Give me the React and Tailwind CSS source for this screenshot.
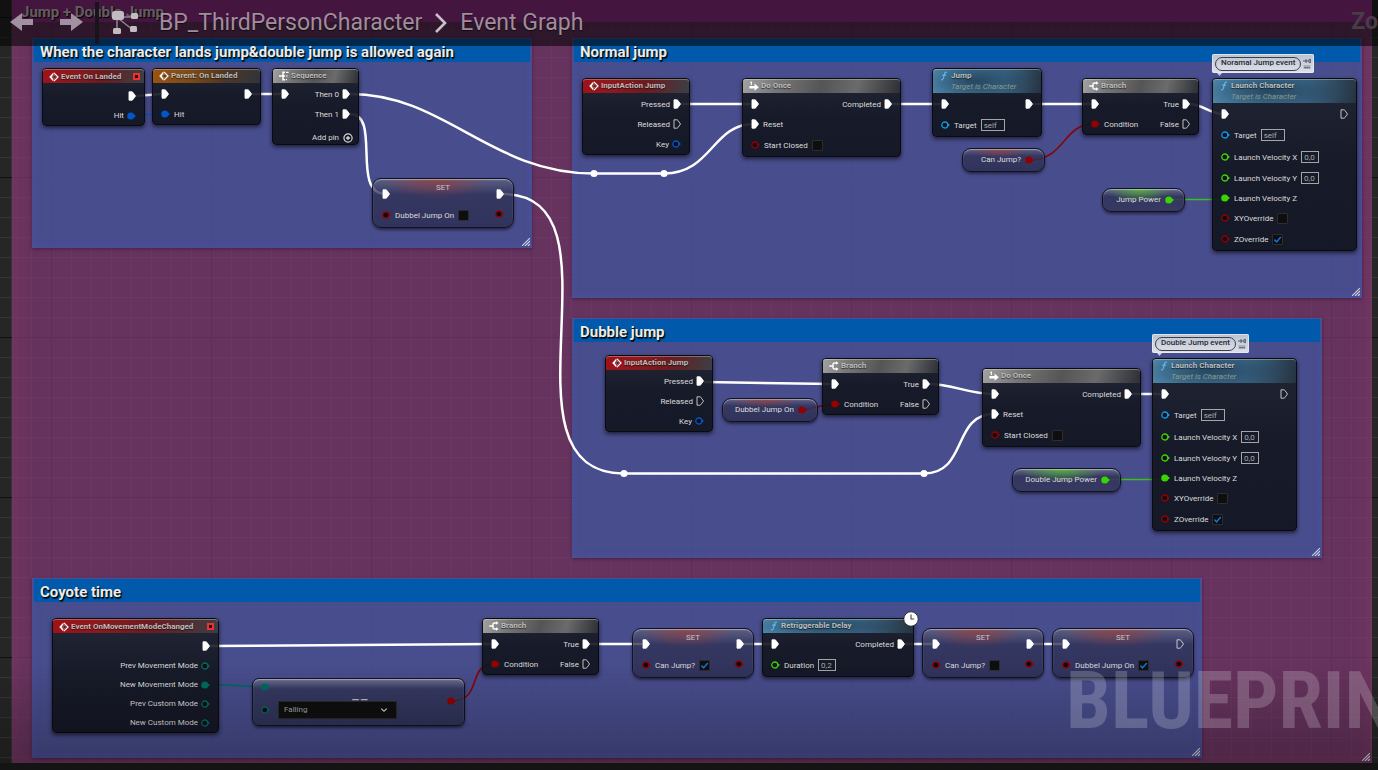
import React from "react";

/* ---------- pins ---------- */

const COLORS = {
  bool: "#920101",
  real: "#38d500",
  object: "#0b9be6",
  struct: "#0057c8",
  byte: "#006b5f",
};

function ExecPin({ on }) {
  return (
    <svg className="h-[10px] w-2 shrink-0" viewBox="0 0 8 10" aria-hidden="true">
      <path
        d="M1 .8H3.8Q4.4.8 4.8 1.3L7.5 5 4.8 8.7Q4.4 9.2 3.8 9.2H1Z"
        fill={on ? "#fff" : "none"}
        stroke={on ? "#fff" : "#d6d6d6"}
        strokeWidth="0.9"
        strokeLinejoin="round"
      />
    </svg>
  );
}

function DataPin({ type, on }) {
  const c = COLORS[type];
  return (
    <svg className="h-[8px] w-[9px] shrink-0" viewBox="0 0 9 8" aria-hidden="true">
      <path d="M7 2.4 9 4 7 5.6Z" fill={c} />
      <circle cx="3.8" cy="4" r={on ? 3.6 : 3} fill={on ? c : "#0b0d14"} stroke={c} strokeWidth={on ? 0 : 1.3} />
    </svg>
  );
}

function Pin({ pin }) {
  return pin.type === "exec" ? <ExecPin on={pin.on} /> : <DataPin type={pin.type} on={pin.on} />;
}

function Check({ checked }) {
  return (
    <span className="grid size-[11px] shrink-0 place-items-center">
      <input
        type="checkbox"
        defaultChecked={checked}
        className="peer col-start-1 row-start-1 size-[11px] appearance-none rounded-[1px] border border-[#2d2d2d] bg-[#0e0e0e]"
      />
      <svg
        className="pointer-events-none invisible col-start-1 row-start-1 size-[9px] peer-checked:visible"
        viewBox="0 0 9 9"
        aria-hidden="true"
      >
        <path d="M1.4 4.6 3.6 6.8 7.8 2" fill="none" stroke="#0a74e0" strokeWidth="1.5" />
      </svg>
    </span>
  );
}

function Field({ value, wide }) {
  return (
    <input
      type="text"
      defaultValue={value}
      className={
        (wide ? "w-6" : "w-[18px]") +
        " h-3 border border-[#a3a5a8] bg-transparent px-[2px] text-[8px] leading-[10px] text-[#a9abae]"
      }
    />
  );
}

function Left({ pin }) {
  if (!pin) return <span />;
  return (
    <label className="flex items-center gap-1">
      <Pin pin={pin} />
      {pin.label && <span className="pt-px">{pin.label}</span>}
      {pin.check !== undefined && <Check checked={pin.check} />}
      {pin.value && <Field value={pin.value} wide={pin.value === "self"} />}
    </label>
  );
}

function Right({ pin }) {
  if (!pin) return <span />;
  return (
    <span className="flex items-center gap-[3px]">
      {pin.label && <span className="pt-px">{pin.label}</span>}
      <Pin pin={pin} />
    </span>
  );
}

/* ---------- header icons ---------- */

function EventIcon() {
  return (
    <svg className="size-[10px] shrink-0" viewBox="0 0 10 10" aria-hidden="true">
      <path d="M4.4.6V2.8L2.9 4.2V5.8L4.4 7.2V9.4L.2 5Z" fill="#fff" />
      <path d="M5 .9 9.1 5 5 9.1" fill="none" stroke="#fff" strokeWidth="1.1" />
      <path d="M3.6 4.3H5.2V3L7.4 5 5.2 7V5.7H3.6Z" fill="#2c0d0d" stroke="#fff" strokeWidth=".3" />
    </svg>
  );
}

function SequenceIcon() {
  return (
    <svg className="size-[10px] shrink-0" viewBox="0 0 10 10" aria-hidden="true">
      <path d="M0 5H4M6 1.3H4V8.7H6M4 5H6" fill="none" stroke="#fff" strokeWidth="1.5" />
      <path d="M7 1.3H9.6M7 5H8.6M7 8.7H8" fill="none" stroke="#fff" strokeWidth="1.2" />
    </svg>
  );
}

function BranchIcon() {
  return (
    <svg className="size-[10px] shrink-0" viewBox="0 0 10 10" aria-hidden="true">
      <path d="M.2 5H3.6M7.4 2H5.6Q4 2 4 3.6V6.4Q4 8 5.6 8H7.4" fill="none" stroke="#fff" strokeWidth="1.4" />
      <path d="M7 .2 9.6 2 7 3.8ZM7 6.2 9.6 8 7 9.8Z" fill="#fff" />
    </svg>
  );
}

function OnceIcon() {
  return (
    <svg className="size-[10px] shrink-0" viewBox="0 0 10 10" aria-hidden="true">
      <path d="M1.2 1.6 2.4.8V4" fill="none" stroke="#fff" strokeWidth="1" />
      <path d="M.4 5H5.6V2.6L9.8 6.2 5.6 9.8V7.4H.4Z" fill="#fff" />
    </svg>
  );
}

function FunctionIcon() {
  return (
    <svg className="size-[10px] shrink-0" viewBox="0 0 10 10" aria-hidden="true">
      <path d="M8 1.6Q6.4.4 5.6 2.6L4.3 7.4Q3.6 9.6 2 8.6M3.2 4.2H7" fill="none" stroke="#5cb8f2" strokeWidth="1.2" />
    </svg>
  );
}

const ICONS = { event: EventIcon, sequence: SequenceIcon, branch: BranchIcon, once: OnceIcon, fn: FunctionIcon };

const HEADERS = {
  red: "bg-[linear-gradient(100deg,#a01119_0%,#8a1a1e_30%,#6a1c20_60%,#3b3f45_100%)]",
  orange: "bg-[linear-gradient(100deg,#9a5310_0%,#7e4a18_35%,#4f3825_65%,#30343c_100%)]",
  gray: "bg-[linear-gradient(105deg,#a2a2a2_0%,#777_22%,#555_50%,#6b6b6b_72%,#2c2f35_100%)]",
  blue: "bg-[radial-gradient(ellipse_50%_80%_at_38%_50%,rgba(22,44,62,.6),transparent),linear-gradient(100deg,#5089ae_0%,#3f7499_35%,#3a6688_65%,#26333f_100%)]",
};

/* ---------- nodes ---------- */

function Node({ x, y, w, tone, icon, title, sub, rows, delegate, addPin, latent }) {
  const Icon = ICONS[icon];
  return (
    <section
      className="absolute rounded-[4px] border border-[#0a0b0f] bg-[linear-gradient(180deg,rgba(30,34,44,.91),rgba(18,21,30,.91)_50%,rgba(16,19,28,.91))] shadow-[0_2px_4px_rgba(0,0,0,.6)]"
      style={{ left: x, top: y, width: w }}
    >
      <header
        className={
          "flex gap-[2px] rounded-t-[3px] pr-1 pl-[6px] shadow-[inset_0_1px_0_rgba(255,255,255,.3)] " +
          (sub ? "h-6 " : "h-[14px] ") +
          (delegate ? "pt-[2px] " : "pt-px ") +
          HEADERS[tone]
        }
      >
        <span className="pt-px">
          <Icon />
        </span>
        <div className="min-w-0 flex-1 leading-[11px] whitespace-nowrap">
          <h3 className="font-bold text-[#bcbcbc] [text-shadow:0_1px_1px_rgba(0,0,0,.6)]">{title}</h3>
          {sub && <p className="text-[#8b9a87] italic">{sub}</p>}
        </div>
        {delegate && (
          <button type="button" aria-label="Delegate" className="mt-[2px] size-[7px] border-2 border-[#f03030] bg-[#2a0808]" />
        )}
      </header>
      <div className={"flex flex-col px-2 " + (delegate ? "pt-[3px]" : "pt-px")}>
        {rows.map(([l, r, h], i) => (
          <div key={i} className={"flex items-center justify-between " + (h || "h-5")}>
            <Left pin={l} />
            <Right pin={r} />
          </div>
        ))}
      </div>
      {addPin && (
        <button type="button" className="mt-2 ml-auto flex h-3 items-center gap-1 pr-[5px]">
          Add pin
          <svg className="size-[10px]" viewBox="0 0 10 10" aria-hidden="true">
            <circle cx="5" cy="5" r="4.1" fill="none" stroke="#d8d8d8" strokeWidth="1.2" />
            <path d="M5 3V7M3 5H7" stroke="#d8d8d8" strokeWidth="1.3" />
          </svg>
        </button>
      )}
      {latent && (
        <svg className="absolute -top-2 -right-[6px] size-4" viewBox="0 0 16 16" aria-hidden="true">
          <circle cx="8" cy="8" r="7.2" fill="#fff" stroke="#222" strokeWidth=".8" />
          <path d="M8 3.6V8H11.2" fill="none" stroke="#444" strokeWidth="1.1" />
        </svg>
      )}
    </section>
  );
}

const GLASS =
  "absolute border border-[#10121c] shadow-[0_2px_3px_rgba(0,0,0,.5),inset_0_1px_1px_rgba(220,220,235,.55)] ";
const GLOW = {
  red: "bg-[radial-gradient(ellipse_38%_40%_at_45%_0%,rgba(160,60,52,.7),transparent),linear-gradient(180deg,rgba(100,102,130,.75)_0%,rgba(48,50,86,.8)_32%,rgba(44,46,82,.84)_100%)]",
  green:
    "bg-[radial-gradient(ellipse_40%_60%_at_45%_0%,rgba(85,190,50,.8),transparent),linear-gradient(180deg,rgba(110,112,140,.75)_0%,rgba(48,50,86,.85)_35%,rgba(52,54,92,.85)_100%)]",
  none: "bg-[linear-gradient(180deg,rgba(120,122,150,.8)_0%,rgba(50,52,88,.8)_22%,rgba(44,47,80,.85)_100%)]",
};

function SetNode({ x, y, w, label, checked, last }) {
  return (
    <section className={GLASS + "h-[50px] rounded-[9px] " + GLOW.red} style={{ left: x, top: y, width: w }}>
      <h3 className="pt-1 text-center leading-[10px] text-[#c9c3cc]">SET</h3>
      <div className="-mt-1 flex h-[10px] items-center justify-between px-[9px]">
        <ExecPin on />
        <ExecPin on={!last} />
      </div>
      <div className="mt-[10px] flex h-3 items-center justify-between px-[9px]">
        <label className="flex items-center gap-1">
          <DataPin type="bool" />
          <span className="pt-px">{label}</span>
          <Check checked={checked} />
        </label>
        <span className="pb-[2px]">
          <DataPin type="bool" />
        </span>
      </div>
    </section>
  );
}

function GetNode({ x, y, w, label, type }) {
  return (
    <section
      className={
        GLASS + "flex h-6 items-center justify-end gap-1 rounded-[9px] pr-[10px] " + (type === "bool" ? GLOW.red : GLOW.green)
      }
      style={{ left: x, top: y, width: w }}
    >
      <span>{label}</span>
      <DataPin type={type} on />
    </section>
  );
}

function EqualNode({ x, y, w }) {
  return (
    <section className={GLASS + "flex h-12 rounded-[7px] px-2 " + GLOW.none} style={{ left: x, top: y, width: w }}>
      <div className="flex flex-col gap-[15px] pt-1">
        <DataPin type="byte" on />
        <DataPin type="byte" />
      </div>
      <div className="relative ml-2 flex-1 pt-[22px]">
        <span className="absolute top-[11px] left-[73px] text-[16px] leading-[24px] text-[#b9bac6]" aria-hidden="true">
          ==
        </span>
        <label className="relative flex h-[18px] w-[119px] items-center border border-[#2a2a2a] bg-[#0f0f0f]">
          <select
            aria-label="Movement mode"
            className="h-4 w-full appearance-none bg-transparent pl-[5px] text-[8px] text-[#a6a6a6]"
            defaultValue="Falling"
          >
            <option>Falling</option>
            <option>Walking</option>
          </select>
          <svg className="pointer-events-none mr-2 size-2 shrink-0" viewBox="0 0 8 8" aria-hidden="true">
            <path d="M1.2 2.6 4 5.2 6.8 2.6" fill="none" stroke="#d0d0d0" strokeWidth="1.2" />
          </svg>
        </label>
      </div>
      <div className="pt-[18px]">
        <DataPin type="bool" on />
      </div>
    </section>
  );
}

function Bubble({ x, y, children }) {
  return (
    <aside
      className="absolute flex h-[19px] items-center gap-[2px] rounded-[2px] bg-[linear-gradient(180deg,#b9c2d2,#dfe1ea)] px-[3px] shadow-[inset_0_0_0_1px_rgba(235,238,245,.7)]"
      style={{ left: x, top: y }}
    >
      <span className="rounded-full border border-[#3c3f46] px-[5px] pb-[2px] leading-[10px] font-medium text-[#26282c]">{children}</span>
      <svg className="h-3 w-2" viewBox="0 0 8 12" aria-hidden="true">
        <path d="M0 3H3M3 1V5M3 3H6M6 1.4V4.6H7.6V1.4Z" stroke="#555a64" strokeWidth="1" fill="none" />
        <path d="M.5 7H7.5V11H.5Z" fill="#aab0bb" />
        <path d="M1.5 9.6H2.6M3.6 9.6H4.6M5.6 9.6H6.6" stroke="#333" strokeWidth="1" />
      </svg>
      <svg className="absolute top-[19px] left-[5px] h-[3px] w-[5px]" viewBox="0 0 5 3" aria-hidden="true">
        <path d="M0 0H5L2.5 3Z" fill="#c9cee0" />
      </svg>
    </aside>
  );
}

function Grip() {
  return (
    <svg className="absolute right-[2px] bottom-[2px] size-2" viewBox="0 0 8 8" aria-hidden="true">
      <path d="M0 8 8 0M3 8 8 3M6 8 8 6" stroke="#d3d3de" strokeWidth="1.1" />
    </svg>
  );
}

function Comment({ x, y, w, h, title }) {
  return (
    <section
      className="absolute bg-[rgba(60,89,161,.7)] p-px pl-[2px] shadow-[inset_0_0_10px_rgba(80,90,190,.35),0_1px_3px_rgba(40,10,40,.5)]"
      style={{ left: x, top: y, width: w, height: h }}
    >
      <h2 className="mr-px h-[23px] bg-[#0059ab] pl-[6px] text-[15px] leading-[26px] font-bold text-[#ececec] [text-shadow:1px_1px_1px_#000,1px_2px_1px_rgba(0,0,0,.6)]">
        {title}
      </h2>
      <Grip />
    </section>
  );
}

/* ---------- graph data ---------- */

const ex = (label) => ({ type: "exec", on: true, label });
const exOff = (label) => ({ type: "exec", label });
const pin = (type, label, extra) => ({ type, label, ...extra });

const inputAction = [
  [null, ex("Pressed")],
  [null, exOff("Released")],
  [null, pin("struct", "Key")],
];
const doOnce = [
  [ex(), ex("Completed")],
  [ex("Reset"), null],
  [pin("bool", "Start Closed", { check: false }), null, "h-[22px]"],
];
const branch = [
  [ex(), ex("True")],
  [pin("bool", "Condition", { on: true }), exOff("False")],
];
const launch = [
  [ex(), exOff()],
  [pin("object", "Target", { value: "self" }), null, "h-[22px]"],
  [pin("real", "Launch Velocity X", { value: "0,0" }), null, "h-[22px]"],
  [pin("real", "Launch Velocity Y", { value: "0,0" }), null],
  [pin("real", "Launch Velocity Z", { on: true }), null],
  [pin("bool", "XYOverride", { check: false }), null],
  [pin("bool", "ZOverride", { check: true }), null, "h-[22px]"],
];

const NODES = [
  {
    x: 42, y: 68, w: 103, tone: "red", icon: "event", title: "Event On Landed", delegate: true,
    rows: [[null, ex()], [null, pin("struct", "Hit", { on: true }), "h-[19px]"]],
  },
  {
    x: 152, y: 68, w: 109, tone: "orange", icon: "event", title: "Parent: On Landed",
    rows: [[ex(), ex()], [pin("struct", "Hit", { on: true }), null]],
  },
  {
    x: 272, y: 68, w: 87, tone: "gray", icon: "sequence", title: "Sequence", addPin: true,
    rows: [[ex(), ex("Then 0")], [null, ex("Then 1")]],
  },
  { x: 582, y: 78, w: 108, tone: "red", icon: "event", title: "InputAction Jump", rows: inputAction },
  { x: 742, y: 78, w: 159, tone: "gray", icon: "once", title: "Do Once", rows: doOnce },
  {
    x: 932, y: 68, w: 110, tone: "blue", icon: "fn", title: "Jump", sub: "Target is Character",
    rows: [[ex(), ex()], [pin("object", "Target", { value: "self" }), null, "h-[22px]"]],
  },
  { x: 1082, y: 78, w: 117, tone: "gray", icon: "branch", title: "Branch", rows: branch },
  { x: 1212, y: 78, w: 145, tone: "blue", icon: "fn", title: "Launch Character", sub: "Target is Character", rows: launch },
  { x: 605, y: 355, w: 108, tone: "red", icon: "event", title: "InputAction Jump", rows: inputAction },
  { x: 822, y: 358, w: 117, tone: "gray", icon: "branch", title: "Branch", rows: branch },
  { x: 982, y: 368, w: 159, tone: "gray", icon: "once", title: "Do Once", rows: doOnce },
  { x: 1152, y: 358, w: 145, tone: "blue", icon: "fn", title: "Launch Character", sub: "Target is Character", rows: launch },
  {
    x: 52, y: 618, w: 167, tone: "red", icon: "event", title: "Event OnMovementModeChanged", delegate: true,
    rows: [
      [null, ex()],
      [null, pin("byte", "Prev Movement Mode"), "h-[19px]"],
      [null, pin("byte", "New Movement Mode", { on: true }), "h-[19px]"],
      [null, pin("byte", "Prev Custom Mode"), "h-[19px]"],
      [null, pin("byte", "New Custom Mode"), "h-[19px]"],
    ],
  },
  { x: 482, y: 618, w: 117, tone: "gray", icon: "branch", title: "Branch", rows: branch },
  {
    x: 762, y: 618, w: 152, tone: "blue", icon: "fn", title: "Retriggerable Delay", latent: true,
    rows: [[ex(), ex("Completed")], [pin("real", "Duration", { value: "0,2" }), null, "h-[22px]"]],
  },
];

const EXEC_WIRES = [
  "M135 96 162 94",
  "M250 94H282",
  "M350 94C445 94 490 173.5 594 173.5H664C712 173.5 712 124 754 124",
  "M350 114C382 114 350 194 386 194",
  "M503 194C632 194 489 473.5 624 473.5H924C968 473.5 952 414 994 414",
  "M680 104H752",
  "M891 104H942",
  "M1033 104H1092",
  "M1189 104C1203 104 1209 114 1224 114",
  "M704 382 832 384",
  "M929 384C953 384 968 394 994 394",
  "M1132 394H1162",
  "M209 646 492 644",
  "M589 644H642",
  "M743 644H772",
  "M905 644H932",
  "M1033 644H1062",
];

function Wires() {
  return (
    <svg className="pointer-events-none absolute inset-0 h-[770px] w-[1378px]" viewBox="0 0 1378 770" fill="none" aria-hidden="true">
      <g stroke="#fff" strokeWidth="2.5">
        {EXEC_WIRES.map((d) => (
          <path key={d} d={d} />
        ))}
      </g>
      <g fill="#fff">
        <circle cx="594" cy="173.5" r="3.6" />
        <circle cx="664" cy="173.5" r="3.6" />
        <circle cx="624" cy="473.5" r="3.6" />
        <circle cx="924" cy="473.5" r="3.6" />
      </g>
      <g strokeWidth="1.6">
        <path d="M132 115 162 114" stroke="#0057c8" />
        <path d="M1029 160C1066 160 1062 124 1094 124" stroke="#860509" />
        <path d="M805 409C816 409 822 404 834 404" stroke="#860509" />
        <path d="M451 701C484 701 466 664 494 664" stroke="#860509" />
        <path d="M1169 199.5H1224M1106 479.5H1164" stroke="#38c018" />
        <path d="M206 684 264 687" stroke="#00695f" />
      </g>
    </svg>
  );
}

function Grid() {
  return (
    <svg className="absolute inset-0 size-full" aria-hidden="true">
      <defs>
        <pattern id="minor" x="11" y="17" width="20" height="20" patternUnits="userSpaceOnUse">
          <path d="M0 .5H20M.5 0V20" stroke="#363636" />
        </pattern>
        <pattern id="major" x="51" y="17" width="160" height="160" patternUnits="userSpaceOnUse">
          <path d="M0 .5H160M.5 0V160" stroke="#121212" />
        </pattern>
      </defs>
      <rect width="100%" height="100%" fill="url(#minor)" />
      <rect width="100%" height="100%" fill="url(#major)" />
    </svg>
  );
}

/* ---------- page chrome ---------- */

function Toolbar() {
  return (
    <header className="relative flex h-[46px] items-center overflow-hidden bg-[rgba(0,0,0,.55)] pl-[10px] text-[23px] whitespace-nowrap text-[#a18d9e]">
      <button type="button" aria-label="Back">
        <svg className="h-5 w-6" viewBox="0 0 24 20" aria-hidden="true">
          <path d="M0 9 12 0V6H23V12H12V18Z" fill="#a090a0" />
        </svg>
      </button>
      <button type="button" aria-label="Forward" className="ml-[25px]">
        <svg className="h-5 w-6" viewBox="0 0 24 20" aria-hidden="true">
          <path d="M24 9 12 0V6H1V12H12V18Z" fill="#a090a0" />
        </svg>
      </button>
      <span className="ml-3 h-[42px] w-1 bg-[#17141a]" />
      <svg className="ml-3 h-6 w-7" viewBox="0 0 28 24" aria-hidden="true">
        <path d="M6 6H22M6 6V20M8 8 22 19" stroke="#8d868d" strokeWidth="1.5" />
        <rect x="1" y="0" width="12" height="9" rx="2.5" fill="#c2bcc2" />
        <rect x="20" y="2" width="7" height="6" rx="1.5" fill="#c2bcc2" />
        <rect x="2" y="17" width="8" height="6" rx="1.5" fill="#c2bcc2" />
        <rect x="19" y="15" width="7" height="6" rx="1.5" fill="#c2bcc2" />
      </svg>
      <nav
        aria-label="Breadcrumb"
        className="ml-5 flex items-center gap-[13px] pb-px leading-[30px] [text-shadow:0_1px_1px_rgba(0,0,0,.6)]"
      >
        <a href="#blueprint">BP_ThirdPersonCharacter</a>
        <svg className="h-5 w-3" viewBox="0 0 12 20" aria-hidden="true">
          <path d="M1 1 10 10 1 19" fill="none" stroke="#c9c0c8" strokeWidth="2.6" />
        </svg>
        <a href="#graph">Event Graph</a>
      </nav>
      <span className="ml-auto pb-[2px] font-bold text-[#4a3b49]">Zo</span>
    </header>
  );
}

export default function App() {
  return (
    <main className="relative flex min-h-screen w-full flex-col overflow-hidden bg-[#262626] font-['Roboto','Liberation_Sans',sans-serif] text-[8px] leading-[10px] text-[#dcdcdc]">
      <Grid />

      <section className="absolute top-0 bottom-[7px] left-3 w-[1360px] bg-[rgba(129,57,118,.7)] shadow-[inset_0_0_24px_rgba(135,60,100,.6)]">
        <h2 className="h-[22px] bg-[#96308c] pl-[9px] text-[15px] leading-[24px] font-bold text-[#d6ced4] [text-shadow:1px_1px_1px_#000]">
          Jump + Double Jump
        </h2>
        <Grip />
      </section>

      <Comment x={32} y={38} w={500} h={210} title="When the character lands jump&double jump is allowed again" />
      <Comment x={572} y={38} w={790} h={260} title="Normal jump" />
      <Comment x={572} y={318} w={750} h={240} title="Dubble jump" />
      <Comment x={32} y={578} w={1170} h={180} title="Coyote time" />

      <Wires />

      {NODES.map((n) => (
        <Node key={n.x + "-" + n.y} {...n} />
      ))}

      <SetNode x={372} y={178} w={142} label="Dubbel Jump On" checked={false} />
      <SetNode x={632} y={628} w={122} label="Can Jump?" checked />
      <SetNode x={922} y={628} w={122} label="Can Jump?" checked={false} />
      <SetNode x={1052} y={628} w={142} label="Dubbel Jump On" checked last />

      <GetNode x={962} y={148} w={83} label="Can Jump?" type="bool" />
      <GetNode x={1102} y={188} w={83} label="Jump Power" type="real" />
      <GetNode x={722} y={398} w={96} label="Dubbel Jump On" type="bool" />
      <GetNode x={1012} y={468} w={109} label="Double Jump Power" type="real" />
      <EqualNode x={252} y={678} w={213} />

      <Bubble x={1212} y={54}>Noramal Jump event</Bubble>
      <Bubble x={1152} y={334}>Double Jump event</Bubble>

      <div className="pointer-events-none absolute inset-x-0 bottom-0 h-[110px] bg-[linear-gradient(180deg,transparent,rgba(0,0,0,.28))]" />
      <p className="pointer-events-none absolute top-[653px] left-[1066px] text-[80px] leading-[96px] font-bold whitespace-nowrap text-[rgba(255,255,255,.2)] font-['Roboto_Condensed','Liberation_Sans_Narrow','Roboto',sans-serif]">
        BLUEPRINT
      </p>

      <Toolbar />
      <footer className="relative mt-auto h-[7px] bg-[#141414]" />
    </main>
  );
}
